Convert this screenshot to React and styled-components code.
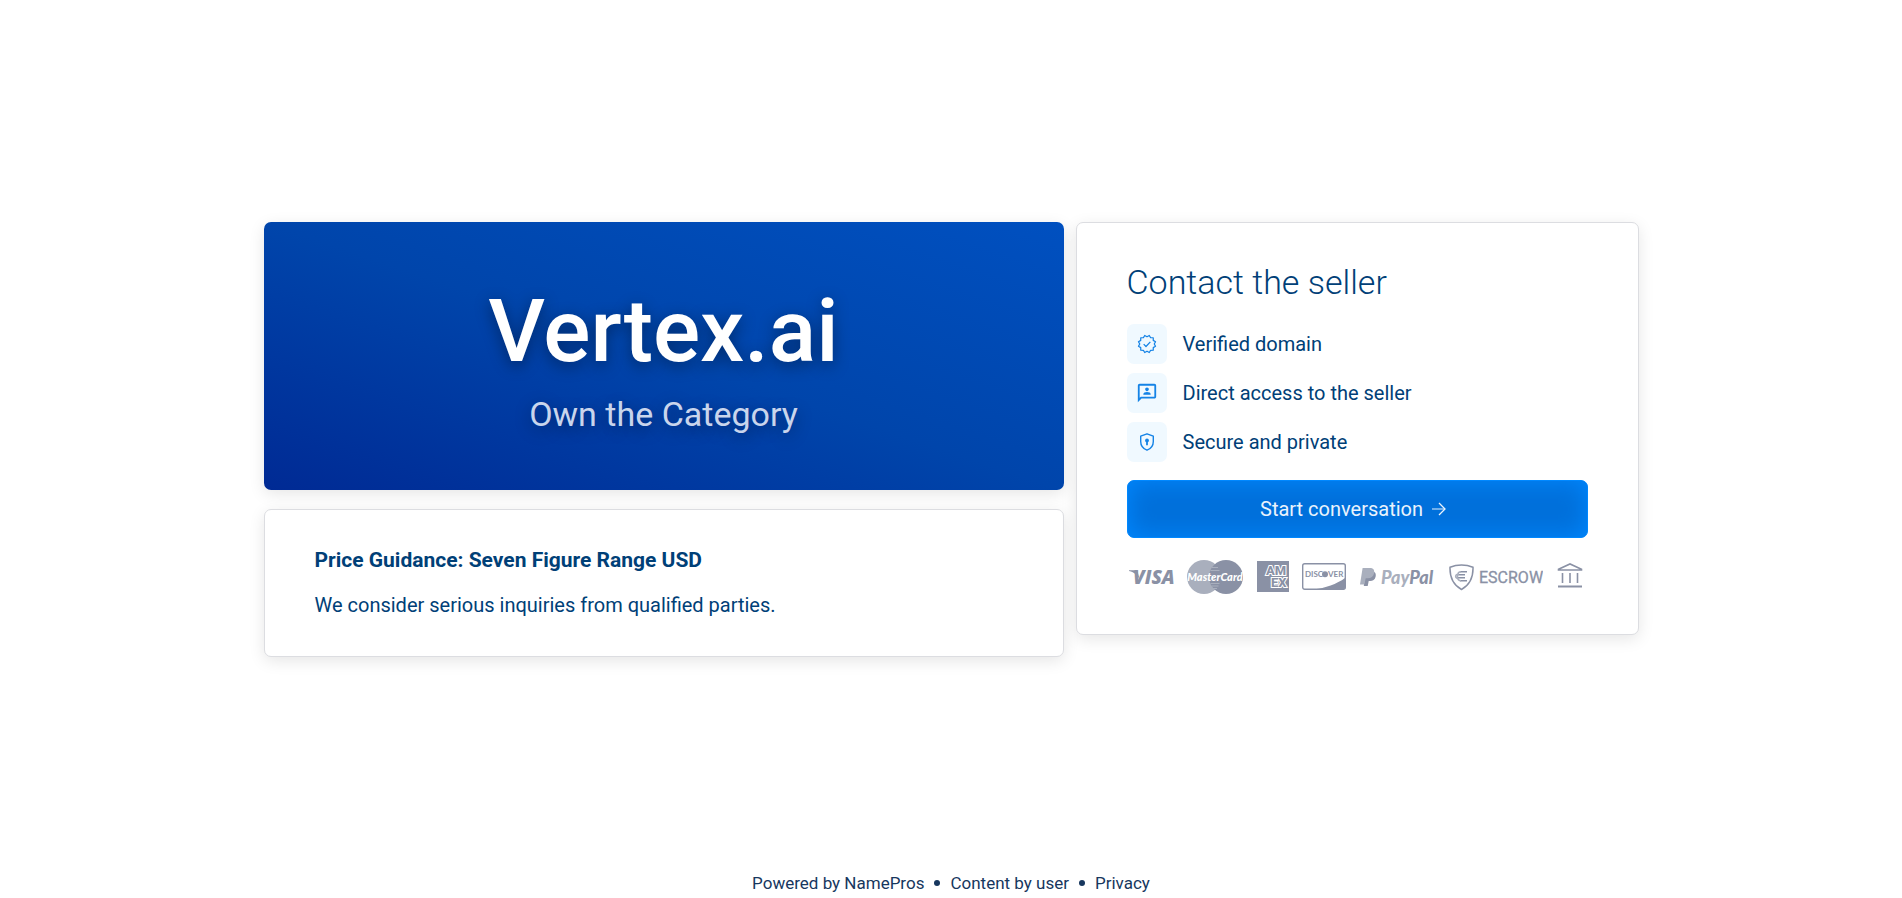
import React from 'react';
import styled, { createGlobalStyle } from 'styled-components';
import { MdOutline3P } from 'react-icons/md';

const dark = '#8a91a5';
const light = '#a9afbd';

// Twelve-pointed seal outline around (12, 12)
const sealPoints = Array.from({ length: 24 }, (_, i) => {
    const angle = ((i * 15 + 15) * Math.PI) / 180;
    const radius = i % 2 === 0 ? 10.6 : 8.7;
    return `${(12 + radius * Math.cos(angle)).toFixed(2)},${(12 + radius * Math.sin(angle)).toFixed(2)}`;
}).join(' ');

const SealIcon = () => (
    <svg width="20" height="20" viewBox="0 0 24 24" fill="none" stroke="currentColor" strokeWidth="1.5" strokeLinejoin="round" aria-hidden="true">
        <polygon points={sealPoints} />
        <path d="M8 12.2l2.8 2.8 5.2-5.6" />
    </svg>
);

const ShieldIcon = () => (
    <svg width="20" height="20" viewBox="0 0 20 20" fill="none" stroke="currentColor" strokeWidth="1.4" aria-hidden="true">
        <path d="M10 1.8l6.3 2.4v5.2c0 4-2.6 7.3-6.3 8.8-3.7-1.5-6.3-4.8-6.3-8.8V4.2z" strokeLinejoin="round" />
        <circle cx="10" cy="8.4" r="1.9" fill="currentColor" stroke="none" />
        <path d="M10 9v4.3" strokeWidth="1.8" />
    </svg>
);

const ArrowIcon = () => (
    <svg width="14" height="14" viewBox="0 0 14 14" fill="none" stroke="currentColor" strokeWidth="1.3" aria-hidden="true">
        <path d="M0 7h13" strokeOpacity="0.75" />
        <path d="M7 1l6 6-6 6" />
    </svg>
);

const VisaLogo = () => (
    <svg width="45" height="34" viewBox="0 0 45 34" role="img" aria-label="Visa">
        <path d="M0 10.3h6.6c1.1 0 1.7.5 2 1.5l2.2 8.2C8.8 15 5.5 12.2 0 10.9z" fill={dark} />
        <text x="4" y="24" fontFamily="Open Sans" fontSize="19" fontWeight="800" fontStyle="italic" fill={dark}>VISA</text>
    </svg>
);

const MasterCardLogo = () => (
    <svg width="56" height="34" viewBox="0 0 56 34" role="img" aria-label="MasterCard">
        <circle cx="17" cy="17" r="17" fill={light} />
        <circle cx="39" cy="17" r="17" fill={dark} />
        <path d="M25 7.5h6M23.5 10.5h9M23.5 23.5h9M24.5 26h7M26 28.5h4" stroke={light} strokeWidth="1" />
        <text x="28" y="21" textAnchor="middle" fontFamily="Lato" fontSize="11" fontWeight="900" fontStyle="italic" fill="#fff">MasterCard</text>
    </svg>
);

const AmexLogo = () => (
    <svg width="32" height="34" viewBox="0 0 32 34" role="img" aria-label="American Express">
        <rect y="1" width="32" height="31" fill={dark} />
        <g fontFamily="Roboto" fontSize="13" fontWeight="800" fill={dark} stroke="#fff" strokeWidth="2" paintOrder="stroke">
            <text x="9" y="15">AM</text>
            <text x="14" y="27">EX</text>
        </g>
    </svg>
);

const DiscoverLogo = () => (
    <svg width="44" height="34" viewBox="0 0 44 34" role="img" aria-label="Discover">
        <rect x="0.7" y="3.7" width="42.6" height="25.6" rx="2" fill="#fff" stroke={dark} strokeWidth="1.4" />
        <path d="M12 29.5c11-1.5 23-5.5 31-11.5v9.5c0 1.2-.8 2-2 2z" fill={dark} />
        <g fontFamily="Lato" fontSize="8" fontWeight="700" fill={dark}>
            <text x="3" y="17">DISC</text>
            <circle cx="23" cy="14.2" r="3" />
            <text x="26" y="17">VER</text>
        </g>
    </svg>
);

const PayPalLogo = () => (
    <svg width="76" height="34" viewBox="0 0 76 34" role="img" aria-label="PayPal">
        <path d="M5.3 11.5h7c3 0 4 2.5 3.3 5.3-.7 3-2.8 4.2-5.5 4.2H8.7L7.7 26H3.8z" fill={dark} />
        <path d="M2.6 8h7.2c3.3 0 5 1.9 4.3 5.2-.7 3.5-3 5-6.3 5H5.7L4.3 24.5H0z" fill={light} />
        <text x="21" y="24" fontFamily="Lato" fontSize="18" fontWeight="900" fontStyle="italic" fill={light}>
            Pay<tspan fill={dark}>Pal</tspan>
        </text>
    </svg>
);

const EscrowLogo = () => (
    <svg width="94" height="34" viewBox="0 0 94 34" role="img" aria-label="Escrow">
        <g fill="none" stroke={dark} strokeWidth="1.5">
            <path d="M12.5 5c4 0 8 .8 11.5 2.2.3 9-3 17.5-11.5 22.3C4 24.7.7 16.2 1 7.2 4.5 5.8 8.500 5 12.500 5z" />
            <path d="M11 11.7h7M9 14.7h7M9 17.7h7M11 20.7h7" />
            <path d="M12 11.7c-3 0-3.5 3-3.5 4.5s.5 4.5 3.5 4.5M10 14.2c-4-.5-4.5 3.5-1 4.5" stroke={light} />
        </g>
        <text x="30" y="23" fontFamily="Roboto" fontSize="16" fill={dark} stroke={dark} strokeWidth="0.3">ESCROW</text>
    </svg>
);

const BankLogo = () => (
    <svg width="26" height="34" viewBox="0 0 26 34" role="img" aria-label="Bank transfer">
        <path d="M1.5 9.2L13 4l11.5 5.2V10h-23z" fill="none" stroke={dark} strokeWidth="1.6" />
        <path d="M5.5 13v10M13 13v10M20.5 13v10" stroke={dark} strokeWidth="1.6" />
        <path d="M1 26.5h24" stroke={dark} strokeWidth="2" />
    </svg>
);

const features = [
    { text: 'Verified domain', icon: <SealIcon /> },
    { text: 'Direct access to the seller', icon: <MdOutline3P size={22} /> },
    { text: 'Secure and private', icon: <ShieldIcon /> },
];

const App = () => {
    return (
        <Page>
            <GlobalStyle />
            <Main>
                <Listing>
                    <Column>
                        <Hero>
                            <Domain>Vertex.ai</Domain>
                            <Tagline>Own the Category</Tagline>
                        </Hero>
                        <Guidance>
                            <Price>Price Guidance: Seven Figure Range USD</Price>
                            <Note>We consider serious inquiries from qualified parties.</Note>
                        </Guidance>
                    </Column>
                    <Seller>
                        <SellerTitle>Contact the seller</SellerTitle>
                        <FeatureList>
                            {features.map((feature) => (
                                <Feature key={feature.text}>
                                    <FeatureIcon>{feature.icon}</FeatureIcon>
                                    {feature.text}
                                </Feature>
                            ))}
                        </FeatureList>
                        <StartButton type="button">
                            Start conversation
                            <ArrowIcon />
                        </StartButton>
                        <Payments>
                            <VisaLogo />
                            <MasterCardLogo />
                            <AmexLogo />
                            <DiscoverLogo />
                            <PayPalLogo />
                            <EscrowLogo />
                            <BankLogo />
                        </Payments>
                    </Seller>
                </Listing>
            </Main>
            <Footer>
                <FooterLink href="#namepros">Powered by NamePros</FooterLink>
                <Dot />
                <span>Content by user</span>
                <Dot />
                <FooterLink href="#privacy">Privacy</FooterLink>
            </Footer>
        </Page>
    );
};

const GlobalStyle = createGlobalStyle`
    * {
        box-sizing: border-box;
    }

    body {
        margin: 0;
        background: #fff;
        color: #004077;
        font-family: Roboto, sans-serif;
        font-size: 20px;
    }

    h1, h2, p, ul {
        margin: 0;
        padding: 0;
    }
`;

const Page = styled.div`
    min-height: 100vh;
    display: flex;
    flex-direction: column;
`;

const Main = styled.main`
    flex: 1;
    display: flex;
    align-items: center;
    justify-content: center;
    padding: 22px 16px 16px;
`;

const Listing = styled.div`
    width: 100%;
    max-width: 1375px;
    display: grid;
    grid-template-columns: 800fr 563fr;
    gap: 12px;
    align-items: start;

    @media (max-width: 1100px) {
        grid-template-columns: 1fr;
    }
`;

const Column = styled.div`
    display: flex;
    flex-direction: column;
    gap: 19px;
`;

const Card = styled.section`
    background: #fff;
    border: 1px solid #dcdde1;
    border-radius: 7px;
    box-shadow: 0 4px 16px rgba(0, 0, 0, 0.1);
`;

const Hero = styled.header`
    padding: 57px 50px 55px;
    border-radius: 7px;
    background: linear-gradient(to top right, #002a94, #0045ab 50%, #0050c0);
    box-shadow: 0 4px 16px rgba(0, 0, 0, 0.1);
    color: #fff;
    text-align: center;
    text-shadow: 0 4px 16px rgba(0, 0, 0, 0.4);
`;

const Domain = styled.h1`
    font-size: 88px;
    font-weight: 500;
    line-height: 104px;
`;

const Tagline = styled.p`
    margin-top: 11px;
    color: #c9d5ec;
    font-size: 34px;
    font-weight: 400;
    line-height: 41px;
`;

const Guidance = styled(Card)`
    display: flex;
    flex-direction: column;
    gap: 15px;
    padding: 35px 50px 36px;
    line-height: 30px;
`;

const Price = styled.p`
    font-size: 21px;
    font-weight: 700;
`;

const Note = styled.p`
    font-size: 20px;
`;

const Seller = styled(Card)`
    padding: 39px 50px 40px;
`;

const SellerTitle = styled.h2`
    font-size: 34px;
    font-weight: 300;
    line-height: 41px;
`;

const FeatureList = styled.ul`
    display: flex;
    flex-direction: column;
    gap: 9px;
    margin: 21px 0 18px;
    list-style: none;
`;

const Feature = styled.li`
    display: flex;
    align-items: center;
    gap: 16px;
`;

const FeatureIcon = styled.span`
    width: 40px;
    height: 40px;
    display: grid;
    place-items: center;
    border-radius: 7px;
    background: #f0f9ff;
    color: #1583e6;
`;

const StartButton = styled.button`
    width: 100%;
    height: 58px;
    display: flex;
    align-items: center;
    justify-content: center;
    gap: 9px;
    padding: 0 8px 0 0;
    border: 1px solid #0088ff;
    border-radius: 7px;
    background: #0070db;
    box-shadow: inset 0 0 24px #0088ff;
    color: #eaf3fd;
    font-family: inherit;
    font-size: 20px;
    cursor: pointer;
`;

const Payments = styled.div`
    display: flex;
    justify-content: space-between;
    margin-top: 22px;
    padding: 0 5px 0 2px;
`;

const Footer = styled.footer`
    display: flex;
    align-items: center;
    justify-content: center;
    gap: 10px;
    padding-bottom: 5px;
    color: #17375e;
    font-size: 17px;
    line-height: 20px;
`;

const FooterLink = styled.a`
    color: inherit;
    text-decoration: none;
`;

const Dot = styled.span`
    width: 6px;
    height: 6px;
    border-radius: 50%;
    background: currentColor;
`;

export default App;
